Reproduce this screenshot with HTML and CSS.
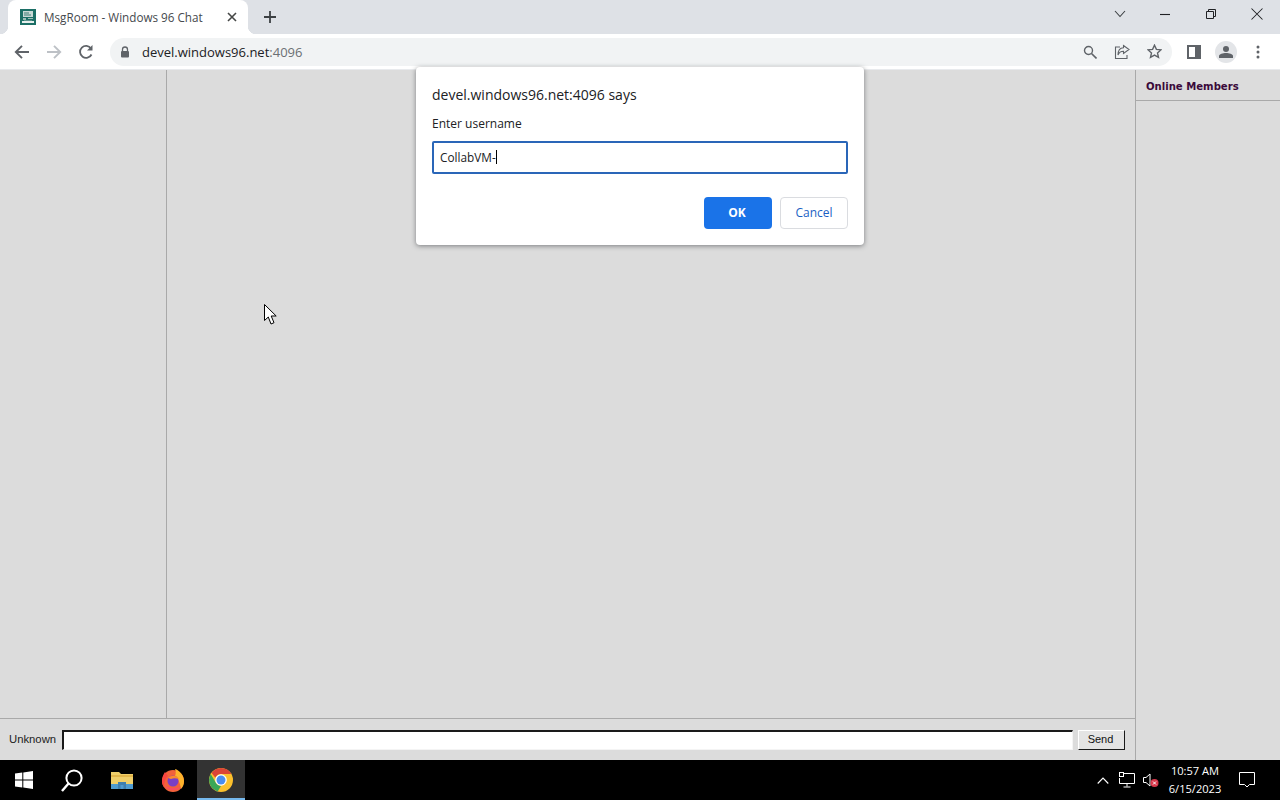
FILE: index.html
```html
<!DOCTYPE html>
<html lang="en">
<head>
<meta charset="utf-8">
<title>MsgRoom - Windows 96 Chat</title>
<link rel="stylesheet" href="styles.css">
</head>
<body>
<div class="screen">
  <header class="tabbar">
    <div class="tab">
      <svg class="favicon" width="16" height="16" viewBox="0 0 16 16"><rect width="16" height="16" fill="#1c6f66"/><rect x="3" y="2" width="10" height="6" fill="#c9d9d6"/><path d="M4 4h5M4 6h7" stroke="#3f7f77"/><path d="M3 9h3v2H3zM8 9h5v1H8z" fill="#9fbdb8"/><path d="M4 11h8v1H4z" fill="#58918a"/><rect x="2" y="12" width="12" height="2" fill="#e6eeec"/></svg>
      <span class="tab-title">MsgRoom - Windows 96 Chat</span>
      <svg class="tab-close" width="10" height="10" viewBox="0 0 10 10"><path d="M1 1l8 8M9 1l-8 8" stroke="#454746" stroke-width="1.6" fill="none"/></svg>
    </div>
    <svg class="new-tab" width="12" height="12" viewBox="0 0 12 12"><path d="M6 0v12M0 6h12" stroke="#3c4043" stroke-width="1.8" fill="none"/></svg>
    <div class="window-controls">
      <svg class="wc-chevron" width="12" height="8" viewBox="0 0 12 8"><path d="M1 1l5 5.500L11 1" stroke="#3c4043" stroke-width="1.100" fill="none"/></svg>
      <svg class="wc-btn wc-min" width="10" height="10" viewBox="0 0 10 10"><path d="M0 5.500h10" stroke="#202124" stroke-width="1.100"/></svg>
      <svg class="wc-btn" width="10" height="10" viewBox="0 0 10 10"><path d="M.5 2.500h7v7h-7zM2.500 2.500v-2h7v7h-2" stroke="#202124" fill="none"/></svg>
      <svg class="wc-btn" width="12" height="12" viewBox="0 0 12 12"><path d="M.5.500l11 11M11.500.500l-11 11" stroke="#202124" stroke-width="1.050" fill="none"/></svg>
    </div>
  </header>

  <nav class="toolbar">
    <div class="nav-buttons">
      <svg width="16" height="16" viewBox="0 0 16 16"><path d="M15 8H2M8 1.800 1.800 8 8 14.200" stroke="#5f6368" stroke-width="1.900" fill="none"/></svg>
      <svg width="16" height="16" viewBox="0 0 16 16"><path d="M1 8h13M8 1.800 14.200 8 8 14.200" stroke="#bdc1c6" stroke-width="1.900" fill="none"/></svg>
      <svg width="16" height="16" viewBox="0 0 16 16"><path d="M13.500 10.500A6 6 0 1 1 13 4.500" stroke="#5f6368" stroke-width="1.800" fill="none"/><path d="M14.500 1v5.500H9z" fill="#5f6368"/></svg>
    </div>
    <div class="omnibox">
      <svg class="lock" width="10" height="12" viewBox="0 0 10 12"><path d="M2.500 5V3.500a2.500 2.500 0 0 1 5 0V5" stroke="#5f6368" stroke-width="1.300" fill="none"/><rect x="1" y="5" width="8" height="6.500" rx="1" fill="#5f6368"/></svg>
      <span class="url">devel.windows96.net<span class="url-port">:4096</span></span>
      <div class="omni-actions">
        <svg width="14" height="14" viewBox="0 0 14 14"><circle cx="5.500" cy="5.500" r="4" stroke="#5f6368" stroke-width="1.400" fill="none"/><path d="M8.500 8.500l5 5" stroke="#5f6368" stroke-width="1.600"/></svg>
        <svg width="16" height="16" viewBox="0 0 16 16"><path d="M6 3H1.500v11.500H13V11" stroke="#5f6368" stroke-width="1.100" fill="none"/><path d="M9.500 1.500l5.500 4-5.500 4V7.300C7 7.300 5 8.500 4 11c0-4 2-7 5.500-7.200z" stroke="#5f6368" stroke-width="1.100" fill="none"/></svg>
        <svg width="15" height="15" viewBox="0 0 15 15"><path d="M7.500 1.200l1.900 4.200 4.500.5-3.400 3 1 4.500-4-2.300-4 2.300 1-4.500-3.400-3 4.500-.5z" stroke="#5f6368" stroke-width="1.400" fill="none"/></svg>
      </div>
    </div>
    <div class="tool-buttons">
      <svg width="14" height="14" viewBox="0 0 14 14"><path d="M1 1h12v12H1z" stroke="#5f6368" stroke-width="2" fill="none"/><path d="M8 1h5v12H8z" fill="#5f6368"/></svg>
      <div class="avatar"><svg width="14" height="12" viewBox="0 0 14 12"><circle cx="7" cy="3" r="3" fill="#5f6368"/><path d="M0 12V10c0-2 4-3 7-3s7 1 7 3v2z" fill="#5f6368"/></svg></div>
      <svg width="4" height="14" viewBox="0 0 4 14"><circle cx="2" cy="2" r="1.500" fill="#5f6368"/><circle cx="2" cy="7" r="1.500" fill="#5f6368"/><circle cx="2" cy="12" r="1.500" fill="#5f6368"/></svg>
    </div>
  </nav>

  <main class="page">
    <div class="chat-area">
      <div class="chat-columns">
        <div class="rooms"></div>
        <div class="messages"></div>
      </div>
      <div class="composer">
        <span class="nick">Unknown</span>
        <div class="chat-input"></div>
        <div class="send">Send</div>
      </div>
    </div>
    <aside class="members">
      <div class="members-title">Online Members</div>
    </aside>
  </main>

  <footer class="taskbar">
    <div class="task-icon">
      <svg width="18" height="18" viewBox="0 0 18 18"><path d="M0 2.600 7.300 1.600V8.500H0zM8.300 1.400 18 0V8.500H8.300zM0 9.500H7.300V16.400L0 15.400zM8.300 9.500H18V18L8.300 16.600z" fill="#fff"/></svg>
    </div>
    <div class="task-icon">
      <svg width="22" height="23" viewBox="0 0 22 23"><circle cx="13" cy="9" r="7.600" stroke="#fff" stroke-width="2" fill="none"/><path d="M7.500 14.500 1 22" stroke="#fff" stroke-width="2.400" fill="none"/></svg>
    </div>
    <div class="task-icon task-folder">
      <svg width="22" height="18" viewBox="0 0 22 18"><path d="M0 1h8l2 2h12v15H0z" fill="#f0cf6a"/><path d="M0 4h22v2H0z" fill="#e2b64a"/><path d="M0 13h22v5H0z" fill="#4f9bd0"/><path d="M7 11h8v7h-2.500v-4h-3v4H7z" fill="#3f7fb0"/></svg>
    </div>
    <div class="task-icon task-firefox">
      <svg width="24" height="24" viewBox="0 0 24 24"><circle cx="12" cy="13" r="11" fill="#f2623a"/><path d="M14 1c4 1 9 6 9 12 0 3-1 6-3 8-1-6-3-11-6-13 1-2 1-5 0-7z" fill="#fdb32c"/><path d="M4 4c-2 3-3 6-3 9 0 2 .5 4 2 6 0-6 2-9 4-11z" fill="#f9453f"/><circle cx="12" cy="13" r="5.500" fill="#7a3fc4"/><path d="M7 10c3-3 9-3 11 1-3-1-6-1-8 0z" fill="#fb8a2e"/><path d="M4 18c3 5 11 6 16 1-5 2-11 1-16-1z" fill="#fb4d5d"/></svg>
    </div>
    <div class="task-icon task-active">
      <svg width="24" height="24" viewBox="0 0 24 24"><circle cx="12" cy="12" r="12" fill="#fbc02d"/><path d="M12 0a12 12 0 0 1 10.400 6H12a6 6 0 0 0-5.600 3.800L2.600 5A12 12 0 0 1 12 0z" fill="#dc4437"/><path d="M1.700 6 7 15a6 6 0 0 0 5 3l-3.300 5.500A12 12 0 0 1 1.700 6z" fill="#3aa757"/><circle cx="12" cy="12" r="5.800" fill="#fff"/><circle cx="12" cy="12" r="4.500" fill="#4a8df0"/></svg>
    </div>
    <div class="tray">
      <svg class="tray-chevron" width="12" height="7" viewBox="0 0 12 7"><path d="M.7 6.500 6 1l5.300 5.500" stroke="#fff" stroke-width="1.100" fill="none"/></svg>
      <svg class="tray-net" width="16" height="16" viewBox="0 0 16 16"><path d="M4 1.500h11.500v10H.5V6" stroke="#fff" fill="none"/><path d="M8 11.500v3M4.500 15h7" stroke="#fff"/><rect x=".5" y=".5" width="4" height="4" fill="#000" stroke="#fff"/></svg>
      <svg class="tray-sound" width="16" height="16" viewBox="0 0 16 16"><path d="M.5 5.500h2.500L7 2v12L3 10.500H.5z" stroke="#fff" fill="none"/><circle cx="11.500" cy="11" r="4" fill="#d8374a"/><path d="M10 9.500l3 3M13 9.500l-3 3" stroke="#fff"/></svg>
      <div class="clock"><span>10:57 AM</span><span>6/15/2023</span></div>
      <svg class="tray-notify" width="16" height="16" viewBox="0 0 16 16"><path d="M.5.500h15v12h-5L8 15l-2.500-2.500h-5z" stroke="#fff" fill="none"/></svg>
    </div>
  </footer>

  <section class="dialog">
    <h1 class="dialog-title">devel.windows96.net:4096 says</h1>
    <p class="dialog-label">Enter username</p>
    <div class="dialog-input">CollabVM-<span class="caret"></span></div>
    <div class="dialog-actions">
      <div class="btn btn-ok">OK</div>
      <div class="btn btn-cancel">Cancel</div>
    </div>
  </section>

  <svg class="pointer" width="13" height="22" viewBox="0 0 13 22"><path d="M.5.500V16.500L4.300 13 7 20l3-1.300-2.800-6.700h5z" fill="#fff" stroke="#000" stroke-width="1"/></svg>
</div>
</body>
</html>
```

FILE: styles.css
```css
* { box-sizing: border-box; }
html, body { margin: 0; padding: 0; }
body { width: 1280px; height: 800px; overflow: hidden; font-family: "Open Sans", "Noto Sans", sans-serif; }
.screen { position: relative; width: 1280px; height: 800px; display: flex; flex-direction: column; background: #dcdcdc; }

.tabbar { height: 34px; background: #dee1e6; display: flex; align-items: center; flex: none; }
.tab { position: relative; width: 240px; height: 34px; margin-left: 8px; padding: 0 11px 0 12px; background: #fff; border-radius: 8px 8px 0 0; display: flex; align-items: center; }
.tab::before, .tab::after { content: ""; position: absolute; bottom: 0; width: 8px; height: 8px; }
.tab::before { left: -8px; background: radial-gradient(circle at 0 0, transparent 8px, #fff 8.500px); }
.tab::after { right: -8px; background: radial-gradient(circle at 100% 0, transparent 8px, #fff 8.500px); }
.favicon { flex: none; }
.tab-title { margin-left: 8px; flex: 1; font-size: 11.700px; color: #45494d; white-space: nowrap; font-family: "Open Sans", sans-serif; }
.new-tab { margin-left: 16px; }
.window-controls { margin-left: auto; height: 34px; display: flex; align-items: center; padding-bottom: 6px; }
.wc-chevron { margin-right: 34px; }
.wc-btn { margin-right: 35px; }
.wc-min { margin-right: 36px; }
.wc-btn:last-child { margin-right: 17px; }

.toolbar { height: 36px; background: #fff; border-bottom: 1px solid #e8eaed; display: flex; align-items: center; flex: none; }
.nav-buttons { width: 110px; padding-left: 14px; display: flex; gap: 16px; align-items: center; flex: none; }
.omnibox { width: 1062px; height: 28px; padding: 0 10px 0 10px; background: #f1f3f4; border-radius: 14px; display: flex; align-items: center; }
.lock { flex: none; }
.url { margin-left: 12px; font-size: 13px; color: #202124; }
.url-port { color: #6b6f73; }
.omni-actions { margin-left: auto; display: flex; align-items: center; gap: 17px; padding-right: 0; }
.tool-buttons { flex: 1; display: flex; align-items: center; padding-left: 15px; }
.avatar { width: 22px; height: 22px; margin: 0 19px 0 14px; border-radius: 50%; background: #e3e5e8; display: flex; align-items: center; justify-content: center; }

.page { flex: 1; min-height: 0; display: flex; background: #dcdcdc; }
.chat-area { width: 1136px; display: flex; flex-direction: column; border-right: 1px solid #a9a9a9; }
.chat-columns { flex: 1; display: flex; border-bottom: 1px solid #a9a9a9; }
.rooms { width: 167px; border-right: 1px solid #a9a9a9; }
.messages { flex: 1; }
.composer { height: 41px; display: flex; align-items: center; padding: 0 10px 0 9px; }
.nick { width: 53px; padding-bottom: 2px; font-size: 11.300px; font-family: "Liberation Sans", sans-serif; color: #222; }
.chat-input { width: 1011px; height: 20px; background: #fff; border-top: 2px solid #1a1a1a; border-left: 2px solid #1a1a1a; border-right: 1px solid #f4f4f4; border-bottom: 1px solid #f4f4f4; }
.send { width: 47px; height: 20px; margin-left: 5px; padding: 0 2px 2px 0; background: #e4e4e4; border: 1px solid; border-color: #fff #1a1a1a #1a1a1a #fff; font-size: 11px; font-family: "Liberation Sans", sans-serif; color: #111; display: flex; align-items: center; justify-content: center; }
.members { flex: 1; }
.members-title { height: 31px; padding: 0 0 0 10px; border-bottom: 1px solid #a9a9a9; font-family: "DejaVu Sans", sans-serif; font-weight: bold; font-size: 10.100px; line-height: 33px; color: #3a0a3a; white-space: nowrap; }

.taskbar { height: 40px; background: #000; display: flex; align-items: stretch; flex: none; }
.task-icon { width: 48px; display: flex; align-items: center; justify-content: center; }
.task-folder { width: 52px; }
.task-firefox { width: 49px; }
.task-active { background: #333; box-shadow: inset 0 -2px 0 #76b9ed; }
.tray { margin-left: auto; display: flex; align-items: center; }
.tray-chevron { margin-right: 10px; }
.tray-net { margin-right: 8px; }
.tray-sound { margin-right: 5px; }
.clock { width: 62px; display: flex; flex-direction: column; align-items: center; font-family: "Open Sans", sans-serif; font-size: 11.100px; line-height: 18px; color: #fff; white-space: nowrap; }
.tray-notify { margin: 0 25px 0 13px; }

.dialog { position: absolute; left: 416px; top: 67px; width: 448px; height: 178px; padding: 16px 16px 0; background: #fff; border-radius: 4px; box-shadow: 0 1px 5px rgba(60, 64, 67, .6); color: #202124; }
.dialog-title { margin: 2px 0 0; font-size: 14px; line-height: 20px; font-weight: 400; }
.dialog-label { margin: 9px 0 0; font-size: 12px; line-height: 20px; }
.dialog-input { margin: 7px 0 0; width: 416px; height: 33px; padding: 0 0 2px 6px; border: 2px solid #2a66b8; border-radius: 2px; font-size: 11.800px; display: flex; align-items: center; color: #202124; }
.caret { width: 1px; height: 14px; background: #000; }
.dialog-actions { margin: 23px 0 0; display: flex; justify-content: flex-end; gap: 8px; width: 416px; }
.btn { height: 32px; padding-bottom: 2px; border-radius: 4px; font-size: 12px; display: flex; align-items: center; justify-content: center; }
.btn-ok { width: 68px; padding-right: 2px; background: #1a73e8; color: #fff; font-weight: 700; }
.btn-cancel { width: 68px; background: #fff; border: 1px solid #dadce0; color: #1a5fc4; }

.pointer { position: absolute; left: 264px; top: 304px; }
```
